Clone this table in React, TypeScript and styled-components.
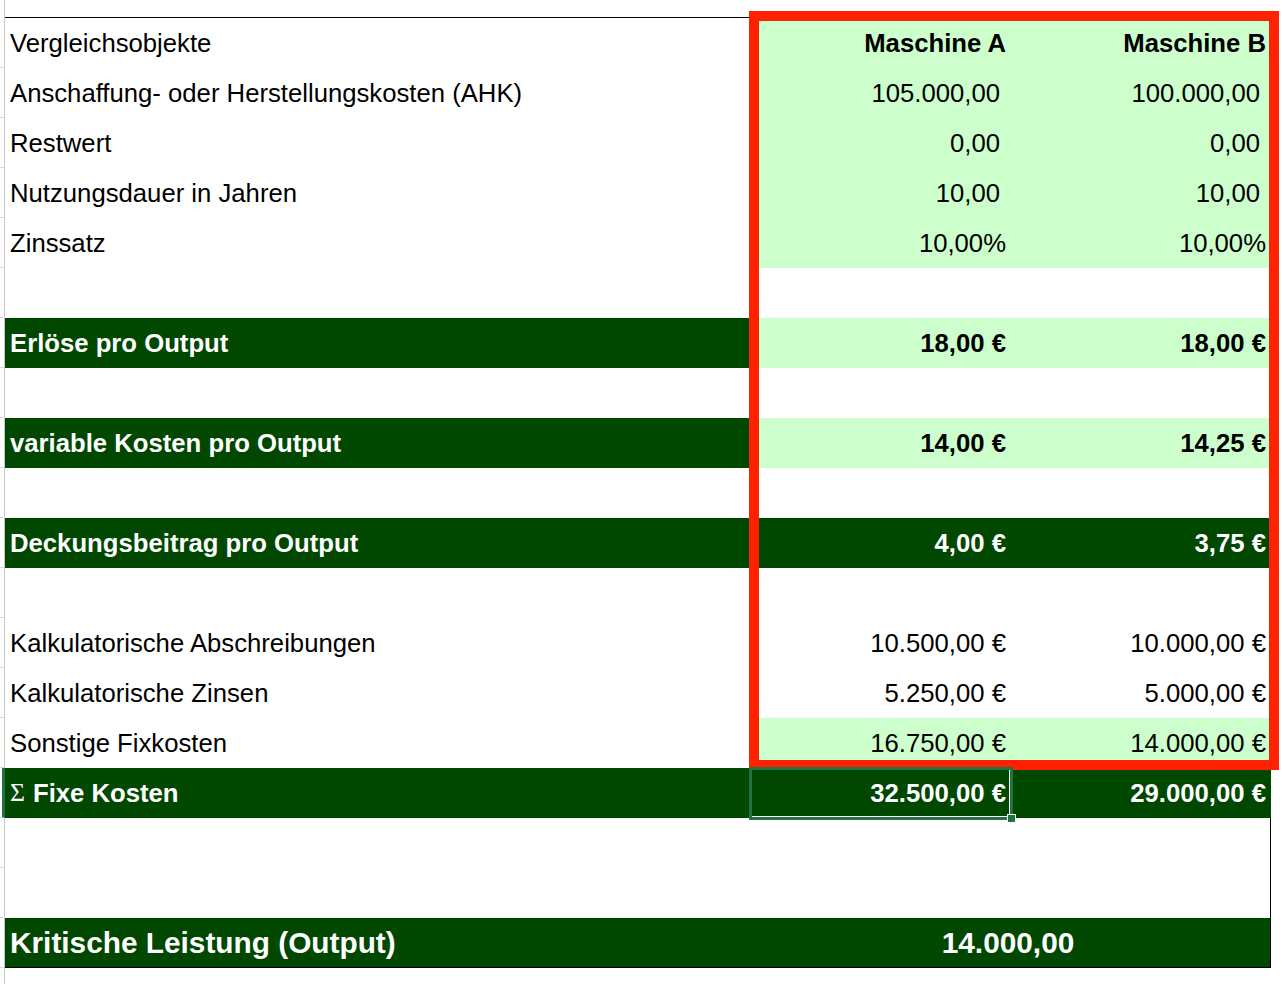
import React from 'react';
import styled, { createGlobalStyle, css } from 'styled-components';

// colours taken from the sheet
const DARK = '#004700';
const LIGHT = '#ccffcc';
const RED = '#ff2200';
const EXCEL = '#217346';

type Tone = 'none' | 'light' | 'dark';

type Line = {
  label: string;
  a?: string;
  b?: string;
  labelTone?: Tone;
  valueTone?: Tone;
  bold?: boolean;
  // plain numbers leave room where the € / % would sit
  plain?: boolean;
  topLine?: boolean;
  sigma?: boolean;
  selected?: boolean;
  edge?: boolean;
};

const lines: Line[] = [
  { label: 'Vergleichsobjekte', a: 'Maschine A', b: 'Maschine B', valueTone: 'light', bold: true, topLine: true },
  { label: 'Anschaffung- oder Herstellungskosten (AHK)', a: '105.000,00', b: '100.000,00', valueTone: 'light', plain: true },
  { label: 'Restwert', a: '0,00', b: '0,00', valueTone: 'light', plain: true },
  { label: 'Nutzungsdauer in Jahren', a: '10,00', b: '10,00', valueTone: 'light', plain: true },
  { label: 'Zinssatz', a: '10,00%', b: '10,00%', valueTone: 'light' },
  { label: '' },
  { label: 'Erlöse pro Output', a: '18,00 €', b: '18,00 €', labelTone: 'dark', valueTone: 'light', bold: true },
  { label: '' },
  { label: 'variable Kosten pro Output', a: '14,00 €', b: '14,25 €', labelTone: 'dark', valueTone: 'light', bold: true },
  { label: '' },
  { label: 'Deckungsbeitrag pro Output', a: '4,00 €', b: '3,75 €', labelTone: 'dark', valueTone: 'dark', bold: true },
  { label: '' },
  { label: 'Kalkulatorische Abschreibungen', a: '10.500,00 €', b: '10.000,00 €' },
  { label: 'Kalkulatorische Zinsen', a: '5.250,00 €', b: '5.000,00 €' },
  { label: 'Sonstige Fixkosten', a: '16.750,00 €', b: '14.000,00 €', valueTone: 'light' },
  { label: 'Fixe Kosten', a: '32.500,00 €', b: '29.000,00 €', labelTone: 'dark', valueTone: 'dark', bold: true, sigma: true, selected: true },
  { label: '', edge: true },
  { label: '', edge: true },
];

const GlobalStyle = createGlobalStyle`
  html, body {
    margin: 0;
    padding: 0;
    background: #fff;
    overflow: hidden;
  }
  body {
    font-family: "Liberation Sans", Arial, sans-serif;
  }
`;

const Sheet = styled.div`
  position: relative;
  width: 1282px;
  height: 984px;
  overflow: hidden;
`;

const Row = styled.div<{ $h?: number }>`
  display: grid;
  grid-template-columns: 5px 745px 261px 260px 1fr;
  height: ${(p) => p.$h ?? 50}px;
`;

const RowHead = styled.div<{ $tick?: boolean; $selected?: boolean }>`
  box-sizing: border-box;
  border-right: 1px solid #c8c8c8;
  ${(p) => p.$tick && 'border-bottom: 1px solid #d8d8d8;'}
  ${(p) =>
    p.$selected &&
    css`
      border-right: 3px solid ${EXCEL};
    `}
`;

const toneBg = (t: Tone) => (t === 'dark' ? DARK : t === 'light' ? LIGHT : 'transparent');

const Cell = styled.div<{
  $tone: Tone;
  $right?: boolean;
  $bold?: boolean;
  $pad?: number;
  $size?: number;
  $topLine?: boolean;
  $edge?: boolean;
  $bottomLine?: boolean;
}>`
  box-sizing: border-box;
  display: flex;
  align-items: center;
  justify-content: ${(p) => (p.$right ? 'flex-end' : 'flex-start')};
  padding: ${(p) => (p.$right ? `0 ${p.$pad ?? 5}px 0 0` : '0 0 0 5px')};
  background: ${(p) => toneBg(p.$tone)};
  color: ${(p) => (p.$tone === 'dark' ? '#fff' : '#000')};
  font-size: ${(p) => p.$size ?? 25.7}px;
  font-weight: ${(p) => (p.$bold ? 700 : 400)};
  white-space: nowrap;
  ${(p) => p.$topLine && 'border-top: 1px solid #000;'}
  ${(p) => p.$edge && 'border-right: 1px solid #000;'}
  ${(p) => p.$bottomLine && 'border-bottom: 1px solid #000;'}
`;

const Merged = styled(Cell)`
  grid-column: 3 / 5;
  justify-content: center;
  padding: 0 4px 0 0;
`;

const Sigma = styled.span`
  font-family: "Liberation Serif", "Times New Roman", serif;
  font-weight: 400;
  margin-right: 8px;
`;

const Highlight = styled.div`
  position: absolute;
  left: 749px;
  top: 11px;
  width: 530px;
  height: 759px;
  box-sizing: border-box;
  border: 10px solid ${RED};
  pointer-events: none;
`;

const Selection = styled.div`
  position: absolute;
  left: 749px;
  top: 767px;
  width: 264px;
  height: 53px;
  box-sizing: border-box;
  border: 3px solid ${EXCEL};
  box-shadow: inset -1px -1px 0 #fff;
  pointer-events: none;
`;

const Handle = styled.div`
  position: absolute;
  right: -6px;
  bottom: -6px;
  width: 7px;
  height: 7px;
  background: ${EXCEL};
  border: 1px solid #fff;
`;

export default function App() {
  return (
    <>
      <GlobalStyle />
      <Sheet>
        <Row $h={17}>
          <RowHead />
          <Cell $tone="none" />
          <Cell $tone="none" />
          <Cell $tone="none" />
          <div />
        </Row>

        {lines.map((l, i) => {
          const labelTone = l.labelTone ?? 'none';
          const valueTone = l.valueTone ?? 'none';
          const pad = l.plain ? 11 : 5;
          return (
            <Row key={i} $h={l.topLine ? 51 : 50}>
              <RowHead $tick $selected={l.selected} />
              <Cell $tone={labelTone} $bold={labelTone === 'dark'} $topLine={l.topLine}>
                {l.sigma && <Sigma>Σ</Sigma>}
                {l.label}
              </Cell>
              <Cell $tone={valueTone} $right $bold={l.bold} $pad={pad} $topLine={l.topLine}>
                {l.a}
              </Cell>
              <Cell $tone={valueTone} $right $bold={l.bold} $pad={pad} $topLine={l.topLine} $edge={l.edge}>
                {l.b}
              </Cell>
              <div />
            </Row>
          );
        })}

        <Row>
          <RowHead $tick />
          <Cell $tone="dark" $bold $size={29.8} $bottomLine>
            Kritische Leistung (Output)
          </Cell>
          <Merged $tone="dark" $bold $size={29.8} $bottomLine $edge>
            14.000,00
          </Merged>
        </Row>

        <Row $h={16}>
          <RowHead />
          <div />
          <div />
          <div />
          <div />
        </Row>

        <Highlight />
        <Selection>
          <Handle />
        </Selection>
      </Sheet>
    </>
  );
}
